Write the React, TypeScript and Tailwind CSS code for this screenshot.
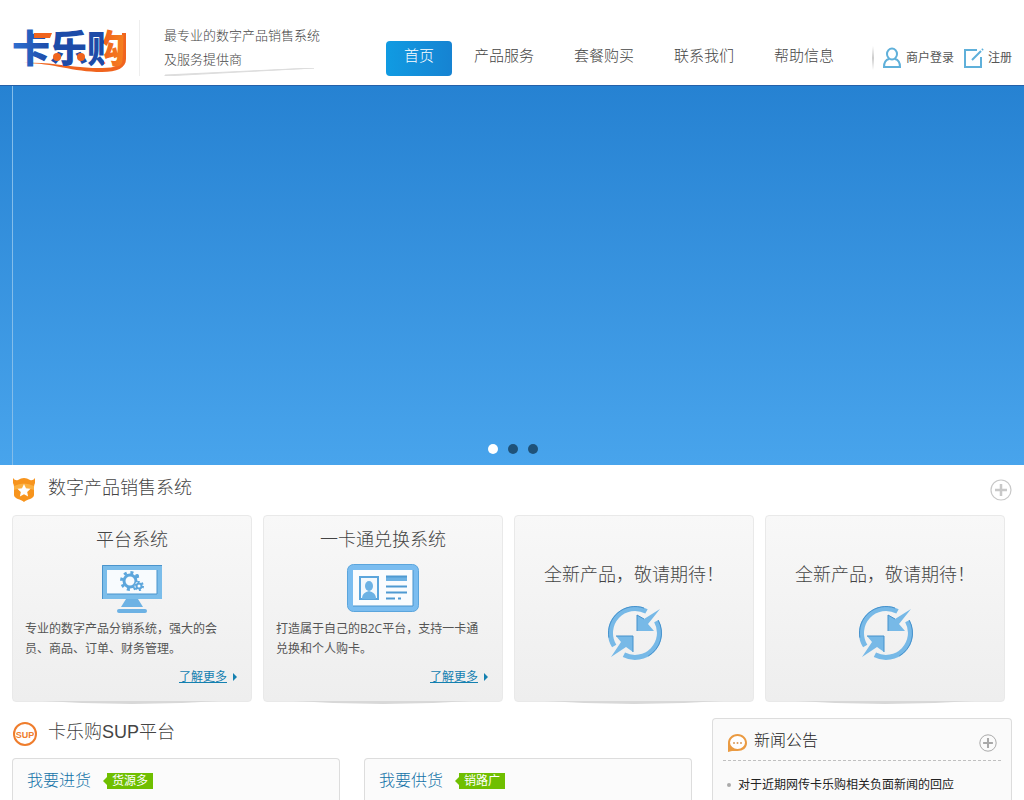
import { ReactNode } from "react";

const NAV = ["产品服务", "套餐购买", "联系我们", "帮助信息"];
const NEWS = ["对于近期网传卡乐购相关负面新闻的回应"];

function Logo() {
  return (
    <svg width="118" height="64" viewBox="0 0 118 64" role="img" aria-label="卡乐购">
      <defs>
        <linearGradient id="logoKa" x1="0" y1="0" x2="1" y2="0">
          <stop offset="0" stopColor="#2f6fd0" />
          <stop offset="1" stopColor="#1d4ba8" />
        </linearGradient>
        <linearGradient id="logoGou" x1="0" y1="0" x2="1" y2="0">
          <stop offset="0.46" stopColor="#1d4ba8" />
          <stop offset="0.46" stopColor="#f0641e" />
          <stop offset="1" stopColor="#f58220" />
        </linearGradient>
      </defs>
      <path d="M12 51c24-2 48 5 78 5 14 0 19-3 19-11l1-24h4v26c0 9-9 13-24 13-30 0-48-9-78-9z" fill="#f0641e" />
      <g fontFamily="'Noto Sans CJK SC', sans-serif" fontWeight="900" fontSize="38">
        <text x="0" y="50" fill="url(#logoKa)">卡</text>
        <text x="38" y="50" fill="#1d4ba8">乐</text>
        <text x="75" y="50" fill="url(#logoGou)">购</text>
      </g>
      <path d="M22 21h18l-2 5H22z" fill="#f0641e" />
      <circle cx="45" cy="45" r="4" fill="#f0641e" />
      <circle cx="69" cy="45" r="4" fill="#f0641e" />
    </svg>
  );
}

function UserIcon() {
  return (
    <svg width="20" height="22" viewBox="0 0 20 22" fill="none" stroke="#5fb0da" strokeWidth="2">
      <ellipse cx="10" cy="7" rx="5" ry="5.500" />
      <path d="M7 12c-4 1-5 4-5 8h16c0-4-1-7-5-8" />
    </svg>
  );
}

function EditIcon() {
  return (
    <svg width="20" height="20" viewBox="0 0 20 20" fill="none" stroke="#5fb0da" strokeWidth="2">
      <path d="M13 2H1v17h16V9" />
      <path d="M8 12l9-9M18 2l1-1" />
    </svg>
  );
}

function BadgeIcon() {
  return (
    <svg width="24" height="26" viewBox="0 0 24 26">
      <path d="M1 1q2 3 5 2 3-2 6-2t6 2q3 1 5-2v5q-1 2-1 4v8c0 4-7 4-10 7c-3-3-10-3-10-7v-8q0-2-1-4z" fill="#f7941d" />
      <path d="M2 9q10-5 20 0v4q-10-4-20 0z" fill="#fbb040" />
      <path d="M12 7l2 4.200 4.600.6-3.400 3.200.9 4.600-4.100-2.300-4.100 2.300.9-4.600-3.400-3.200 4.600-.6z" fill="#fff" />
    </svg>
  );
}

function SupIcon() {
  return (
    <svg width="26" height="26" viewBox="0 0 26 26">
      <circle cx="13" cy="13" r="11" fill="#fff" stroke="#ef7d2d" strokeWidth="2" />
      <text x="13" y="17" textAnchor="middle" fontFamily="'Liberation Sans', sans-serif" fontWeight="700" fontSize="9" fill="#ef7d2d">SUP</text>
    </svg>
  );
}

function ChatIcon() {
  return (
    <svg width="20" height="20" viewBox="0 0 20 20">
      <path d="M1 19v-9C1 5 5 1 10.500 1S20 5 20 10s-4 8-9.500 8H5z" fill="#ea9a41" />
      <ellipse cx="10.500" cy="9.500" rx="7.500" ry="6.500" fill="#fff" />
      <g fill="#d99a5a">
        <circle cx="7" cy="10" r="1" />
        <circle cx="10.500" cy="10" r="1" />
        <circle cx="14" cy="10" r="1" />
      </g>
    </svg>
  );
}

function PlusIcon({ size, color }: { size: number; color: string }) {
  return (
    <svg width={size} height={size} viewBox="0 0 22 22" fill="none" stroke={color}>
      <circle cx="11" cy="11" r="10" strokeWidth="1.200" />
      <path d="M11 5v12M5 11h12" strokeWidth="2.500" />
    </svg>
  );
}

function MonitorIcon() {
  return (
    <svg width="60" height="50" viewBox="0 0 60 50">
      <path d="M0 1h60v34H0z" fill="#7bbdea" />
      <path d="M0.500 35V1.500H60" fill="none" stroke="#4a94cc" />
      <path d="M5 6h50v24H5z" fill="#f8fbfe" />
      <path d="M55 6v24H5" fill="none" stroke="#4a94cc" />
      <path d="M24 35h12l5 8H19z" fill="#6db2e4" />
      <rect x="15" y="45" width="30" height="4" rx="2" fill="#6db2e4" />
      <circle cx="28" cy="17" r="6" fill="none" stroke="#5da6dc" strokeWidth="3" />
      <circle cx="28" cy="17" r="8.500" fill="none" stroke="#5da6dc" strokeWidth="3" strokeDasharray="3 3.700" />
      <circle cx="37" cy="22" r="4.500" fill="#f8fbfe" />
      <circle cx="37" cy="22" r="2.500" fill="none" stroke="#5da6dc" strokeWidth="2" />
      <circle cx="37" cy="22" r="4" fill="none" stroke="#5da6dc" strokeWidth="2" strokeDasharray="2 2.200" />
      <circle cx="35" cy="12" r="2" fill="#5da6dc" />
    </svg>
  );
}

function CardIcon() {
  return (
    <svg width="72" height="50" viewBox="0 0 72 50">
      <rect x="0.500" y="0.500" width="71" height="47" rx="6" fill="#7bbdf0" stroke="#5ba5dc" />
      <path d="M6 6h60v36H6z" fill="#fafcfe" />
      <path d="M66 6v36H6" fill="none" stroke="#4a94cc" />
      <path d="M13 13h18v22H13z" fill="#f4f9fd" stroke="#5ba5dc" strokeWidth="2" />
      <ellipse cx="22" cy="22" rx="4" ry="5" fill="#6db2e4" />
      <path d="M15 35c0-5 3-7 7-8 4 1 7 3 7 8z" fill="#6db2e4" />
      <path d="M39 12h21v5H39z" fill="#6db2e4" />
      <path d="M39 12.500h21M39 22.500h21M39 28.500h21M39 34.500h9M51 34.500h3" stroke="#4f9ad2" strokeWidth="2" />
    </svg>
  );
}

function SyncIcon() {
  return (
    <svg width="56" height="56" viewBox="0 0 56 56">
      <g fill="none" stroke="#77b9e7" strokeWidth="5">
        <path d="M7.200 41A24.500 24.500 0 0 1 39.500 6.400" />
        <path d="M49.400 16.100A24.500 24.500 0 0 1 16.900 49.800" />
      </g>
      <g fill="none" stroke="#4591cc">
        <path d="M1.900 32.600A26.500 26.500 0 0 1 37 3.100" />
        <path d="M51.200 15.200A26.500 26.500 0 0 1 41.200 51" />
      </g>
      <g fill="#77b9e7">
        <path d="M30 10l7 4 16-10-12 15 6 7H30z" />
        <path d="M9 31h17v16l-7-5-15 10 10-15z" />
      </g>
      <path d="M30 26V10l7 4M9 31h17v16" fill="none" stroke="#4591cc" />
    </svg>
  );
}

function ProductCard({ title, icon, text }: { title: string; icon: ReactNode; text?: string }) {
  return (
    <article className="relative h-[187px] rounded border border-[#e9e9e9] bg-gradient-to-b from-[#f8f8f8] to-[#eeeeee] px-3">
      {/* curved shadow under the bottom edge */}
      <svg className="absolute inset-x-0 -bottom-1 h-1 w-full" viewBox="0 0 240 4" preserveAspectRatio="none">
        <path d="M30 0h180Q120 6 30 0z" fill="#d8d8d8" />
      </svg>
      {text ? (
        <>
          <h3 className="mt-3 text-center text-lg leading-6 text-[#444]">{title}</h3>
          <div className="mt-3 flex justify-center">{icon}</div>
          <p className="mt-[5px] font-['Open_Sans','Noto_Sans_CJK_SC',sans-serif] text-xs font-normal leading-5 text-[#555]">{text}</p>
          <div className="mt-2 flex items-center justify-end gap-1">
            <a href="#" className="text-xs font-normal leading-5 text-[#1480b0] underline">了解更多</a>
            <span className="ml-0.5 mr-0.5 border-y-4 border-l-4 border-y-transparent border-l-[#1480b0]" />
          </div>
        </>
      ) : (
        <>
          <h3 className="mt-[47px] text-center text-lg leading-6 text-[#444]">{title}</h3>
          <div className="mt-[18px] flex justify-center pl-0.5">{icon}</div>
        </>
      )}
    </article>
  );
}

function SupplyPanel({ title, tag }: { title: string; tag: string }) {
  return (
    <article className="flex-1 rounded-t border border-b-0 border-[#dddddd] bg-[#fbfbfb] px-3.5 pt-2.5">
      <div className="flex items-center">
        <h3 className="text-base leading-6 text-[#1272a8]">{title}</h3>
        <span className="ml-3 border-y-4 border-r-4 border-y-transparent border-r-[#6fbf00]" />
        <span className="bg-[#6fbf00] px-[5px] text-xs font-normal leading-4 text-white">{tag}</span>
      </div>
    </article>
  );
}

export default function App() {
  return (
    <div className="flex min-h-screen flex-col bg-white font-['Liberation_Sans','Noto_Sans_CJK_SC',sans-serif] font-light">
      <header className="mx-auto flex h-[85px] w-full max-w-[1000px] items-start">
        <a href="#" className="mt-3">
          <Logo />
        </a>
        <div className="ml-[9px] mt-5 h-14 w-px bg-[#eeeeee]" />
        <div className="ml-6 mt-6">
          <p className="whitespace-nowrap text-[13px] leading-6 text-[#444]">
            最专业的数字产品销售系统
            <br />
            及服务提供商
          </p>
          <svg width="156" height="8" viewBox="0 0 156 8" className="-mt-1">
            <path d="M1 7L150 0 1 8z" fill="#d5d5d5" stroke="#dddddd" />
          </svg>
        </div>
        <nav className="ml-auto mt-[41px] flex whitespace-nowrap text-[15px] leading-[30px] text-[#444]">
          <a href="#" className="mr-0.5 h-[35px] rounded bg-gradient-to-r from-[#109be2] to-[#1683d2] px-[18px] text-white">首页</a>
          {NAV.map((item) => (
            <a key={item} href="#" className="px-5">{item}</a>
          ))}
        </nav>
        <div className="ml-[18px] mt-[47px] flex h-[22px] items-center whitespace-nowrap text-xs font-normal text-[#555]">
          <div className="mr-2 h-6 w-0.5 bg-gradient-to-b from-white via-[#cccccc] to-white" />
          <a href="#" className="flex items-center gap-1">
            <UserIcon />
            商户登录
          </a>
          <a href="#" className="ml-2.5 flex items-center gap-1">
            <EditIcon />
            注册
          </a>
        </div>
      </header>

      <section className="h-[380px] border-t border-[#2560a8] bg-gradient-to-b from-[#2682d2] to-[#48a4ec]">
        <div className="mx-auto flex h-full max-w-[1000px] items-end justify-center gap-2.5 border-l border-[#83bdea] pb-[11px]">
          <button aria-label="1" className="size-2.5 rounded-full bg-white" />
          <button aria-label="2" className="size-2.5 rounded-full bg-[#1f5279]" />
          <button aria-label="3" className="size-2.5 rounded-full bg-[#1f5279]" />
        </div>
      </section>

      <main className="mx-auto flex w-full max-w-[1000px] flex-1 flex-col">
        <section>
          <div className="flex h-[50px] items-center">
            <BadgeIcon />
            <h2 className="mb-1 ml-3 text-lg leading-6 text-[#444]">数字产品销售系统</h2>
            <a href="#" aria-label="更多" className="ml-auto">
              <PlusIcon size={22} color="#c8c8c8" />
            </a>
          </div>
          <div className="grid grid-cols-4 gap-[11px] pr-[7px]">
            <ProductCard title="平台系统" icon={<MonitorIcon />} text="专业的数字产品分销系统，强大的会员、商品、订单、财务管理。" />
            <ProductCard title="一卡通兑换系统" icon={<CardIcon />} text="打造属于自己的B2C平台，支持一卡通兑换和个人购卡。" />
            <ProductCard title="全新产品，敬请期待！" icon={<SyncIcon />} />
            <ProductCard title="全新产品，敬请期待！" icon={<SyncIcon />} />
          </div>
        </section>

        <div className="flex flex-1 gap-5">
          <section className="flex flex-1 flex-col">
            <div className="flex h-14 items-center pt-2">
              <SupIcon />
              <h2 className="mb-1 ml-2.5 text-lg leading-6 text-[#444]">卡乐购SUP平台</h2>
            </div>
            <div className="flex flex-1 gap-6">
              <SupplyPanel title="我要进货" tag="货源多" />
              <SupplyPanel title="我要供货" tag="销路广" />
            </div>
          </section>
          <section className="mt-4 w-[300px] rounded-t border border-b-0 border-[#dddddd] bg-[#fafafa] px-2.5">
            <div className="flex h-[42px] items-center border-b border-dashed border-[#c0c0c0] pl-1 pt-1.5">
              <ChatIcon />
              <h2 className="mb-1 ml-[7px] text-base leading-6 text-[#222]">新闻公告</h2>
              <a href="#" aria-label="更多新闻" className="ml-auto mr-1">
                <PlusIcon size={18} color="#a8a8a8" />
              </a>
            </div>
            <ul className="mt-3.5">
              {NEWS.map((title) => (
                <li key={title} className="flex items-center pl-1 text-xs leading-5 font-normal text-[#222]">
                  <span className="mr-[7px] size-1 rounded-full bg-[#aaaaaa]" />
                  <a href="#">{title}</a>
                </li>
              ))}
            </ul>
          </section>
        </div>
      </main>
    </div>
  );
}
